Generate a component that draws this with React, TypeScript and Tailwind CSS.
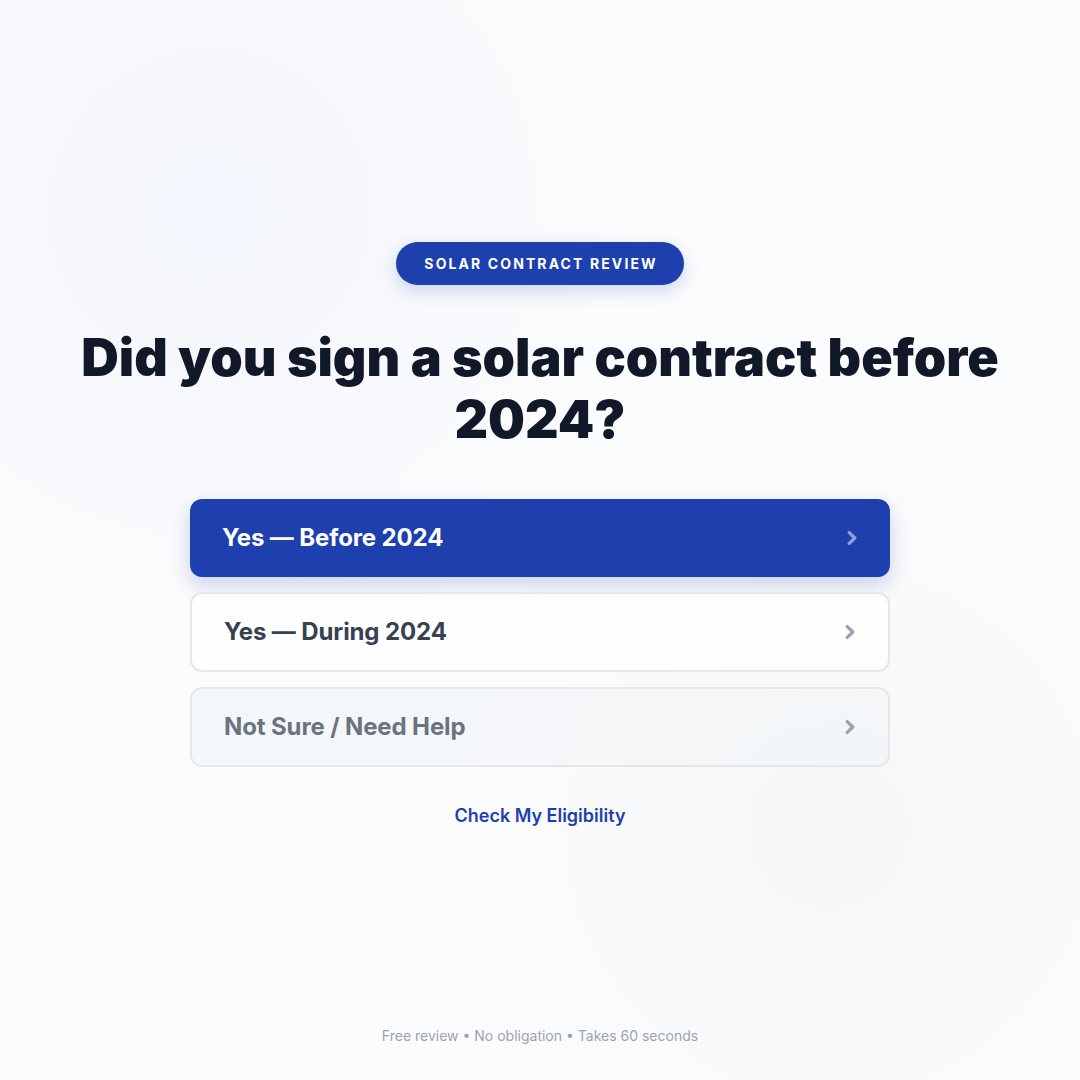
import React from "react";

function Chevron({ className }: { className: string }) {
  return (
    <svg viewBox="0 0 12 16" className={className} fill="none">
      <path d="M3.2 2.6 L8.8 8 L3.2 13.4" stroke="currentColor" strokeWidth="3.4" strokeLinecap="round" strokeLinejoin="round" />
    </svg>
  );
}

export default function App() {
  return (
    <div
      className="relative min-h-screen w-full overflow-hidden bg-[#fbfcfd] flex flex-col items-center"
      style={{ fontFamily: "Inter, 'Noto Sans', sans-serif" }}
    >
      <div className="pointer-events-none absolute -left-60 -top-60 h-[900px] w-[900px] rounded-full bg-[radial-gradient(circle,rgba(232,237,250,0.45),rgba(255,255,255,0)_70%)]" />
      <div className="pointer-events-none absolute right-[-150px] bottom-[-150px] h-[800px] w-[800px] rounded-full bg-[radial-gradient(circle,rgba(240,243,245,0.6),rgba(255,255,255,0)_70%)]" />
      <main className="relative flex w-full flex-1 flex-col items-center pt-[242px]">
        <div className="rounded-full bg-[#1e40af] py-3 pl-7 pr-[26px] text-[14px] font-bold uppercase leading-[19px] tracking-[0.15em] text-white shadow-[0_6px_18px_rgba(30,64,175,0.2)]">
          Solar Contract Review
        </div>
        <h1 className="mt-[42px] text-center text-[52px] font-black leading-[62px] text-[#111827]">
          Did you sign a solar contract before
          <br />
          2024?
        </h1>
        <div className="mt-[48px] flex w-[700px] flex-col gap-[15px]">
          <button className="flex h-[78px] items-center justify-between rounded-xl bg-[#1e40af] px-8 text-left shadow-[0_8px_20px_rgba(30,64,175,0.22)]">
            <span className="text-[24px] font-bold tracking-[-0.005em] text-white">Yes — Before 2024</span>
            <Chevron className="h-4 w-3 text-[#8e9dd4]" />
          </button>
          <button className="flex h-[80px] items-center justify-between rounded-xl border-2 border-[#e5e7eb] bg-white/70 px-8 text-left">
            <span className="text-[24px] font-bold tracking-[-0.005em] text-[#374151]">Yes — During 2024</span>
            <Chevron className="h-4 w-3 text-[#9ca3af]" />
          </button>
          <button className="flex h-[80px] items-center justify-between rounded-xl border-2 border-[#e5e7eb] bg-[#f3f5f7]/80 px-8 text-left">
            <span className="text-[24px] font-bold tracking-[-0.005em] text-[#6b7280]">Not Sure / Need Help</span>
            <Chevron className="h-4 w-3 text-[#9ca3af]" />
          </button>
        </div>
        <a className="mt-[35px] text-[18px] font-semibold text-[#1e40af]">Check My Eligibility</a>
      </main>
      <footer className="relative pb-[34px] text-[14px] text-[#9ca3af]">
        Free review • No obligation • Takes 60 seconds
      </footer>
    </div>
  );
}
